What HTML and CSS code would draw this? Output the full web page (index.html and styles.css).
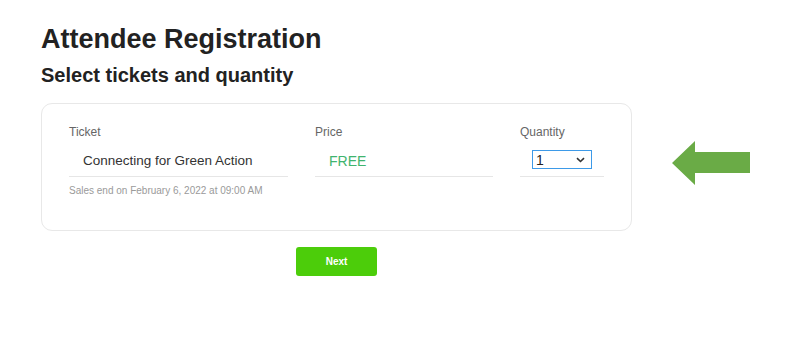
FILE: index.html
```html
<!DOCTYPE html>
<html>
<head>
<meta charset="utf-8">
<link rel="stylesheet" href="styles.css">
</head>
<body>
<div class="page">
  <h1 class="title">Attendee Registration</h1>
  <h2 class="subtitle">Select tickets and quantity</h2>
  <div class="card">
    <div class="cols">
      <div class="col col-ticket">
        <div class="label">Ticket</div>
        <div class="field">Connecting for Green Action</div>
        <div class="note">Sales end on February 6, 2022 at 09:00 AM</div>
      </div>
      <div class="col col-price">
        <div class="label">Price</div>
        <div class="field free">FREE</div>
      </div>
      <div class="col col-qty">
        <div class="label">Quantity</div>
        <div class="field qty-field">
          <div class="select"><span>1</span>
            <svg width="9" height="6" viewBox="0 0 9 6"><path d="M1 1.2 L4.5 4.5 L8 1.2" fill="none" stroke="#333" stroke-width="1.6"/></svg>
          </div>
        </div>
      </div>
    </div>
  </div>
  <div class="actions"><button class="next">Next</button></div>
  <svg class="arrow" width="80" height="46" viewBox="0 0 80 46"><polygon points="0,22 23,0 23,11 78,11 78,32 23,32 23,44" fill="#6aab46"/></svg>
</div>
</body>
</html>
```

FILE: styles.css
```css
html, body { margin: 0; padding: 0; background: #fff; }
body { font-family: "Liberation Sans", Arial, sans-serif; color: #222; }
.page { position: relative; width: 799px; height: 337px; padding: 23px 0 0 41px; box-sizing: border-box; }
.title { margin: 0; font-size: 27px; line-height: 32px; font-weight: bold; color: #222; }
.subtitle { margin: 8px 0 0; font-size: 20px; line-height: 25px; font-weight: bold; color: #222; }
.card { margin-top: 15px; width: 591px; height: 128px; box-sizing: border-box; border: 1px solid #e8e8e8; border-radius: 11px; padding: 21px 27px 0; }
.cols { display: flex; gap: 27px; }
.col-ticket { width: 219px; }
.col-price { width: 178px; }
.col-qty { width: 84px; }
.label { font-size: 12px; line-height: 14px; color: #666; }
.field { height: 35px; border-bottom: 1px solid #e6e6e6; box-sizing: border-box; padding: 11px 0 0 14px; font-size: 13.5px; line-height: 16px; color: #333; margin-top: 3px; }
.free { color: #3fb46e; font-size: 14px; }
.qty-field { padding: 8px 0 0 12px; }
.select { width: 60px; height: 19px; box-sizing: border-box; border: 1.5px solid #3d9ae8; display: flex; align-items: center; justify-content: space-between; padding: 0 6px 0 3px; font-size: 14px; color: #222; }
.note { margin-top: 8px; font-size: 10px; line-height: 12px; color: #9a9a9a; }
.actions { width: 591px; display: flex; justify-content: center; margin-top: 16px; }
.next { width: 81px; height: 29px; border: none; border-radius: 3px; background: #4ccd0a; color: #fff; font-family: "Liberation Sans", Arial, sans-serif; font-size: 10px; font-weight: bold; }
.arrow { position: absolute; left: 672px; top: 141px; }
```
